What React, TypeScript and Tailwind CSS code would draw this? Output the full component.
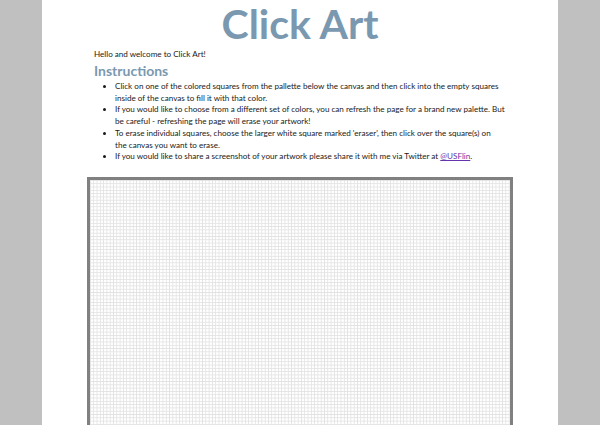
export default function App() {
  const font = { fontFamily: '"Lato", "Open Sans", sans-serif' };
  return (
    <div className="min-h-[425px] h-[425px] overflow-hidden bg-[#c0c0c0] flex justify-center">
      <div className="w-[516px] bg-white flex flex-col items-stretch text-[#1a1a1a]" style={font}>
        <h1 className="text-center text-[41px] leading-[44px] font-bold text-[#7a99b0] mt-[2px]">Click Art</h1>
        <div className="pl-[52px] pr-[47px] mt-[2px]">
          <p className="text-[8.1px] leading-[12px]">Hello and welcome to Click Art!</p>
          <h2 className="text-[14px] leading-[18px] font-bold text-[#7a99b0] mt-[2px]">Instructions</h2>
          <ul className="list-disc pl-[21px] text-[8.1px] leading-[11.7px] mt-[1px]">
            <li>Click on one of the colored squares from the pallette below the canvas and then click into the empty squares inside of the canvas to fill it with that color.</li>
            <li>If you would like to choose from a different set of colors, you can refresh the page for a brand new palette. But be careful - refreshing the page will erase your artwork!</li>
            <li>To erase individual squares, choose the larger white square marked 'eraser', then click over the square(s) on the{"\u00a0"}canvas you want to erase.</li>
            <li>If you would like to share a screenshot of your artwork please share it with me via Twitter at <a className="text-[#6633aa] underline" href="#">@USFlin</a>.</li>
          </ul>
        </div>
        <div className="mt-[14px] flex justify-center">
          <div className="w-[426px] h-[300px] shrink-0 border-[3px] border-[#808080] bg-white bg-[linear-gradient(to_right,#e2e2e2_1px,transparent_1px),linear-gradient(to_bottom,#e2e2e2_1px,transparent_1px)] bg-[size:3.3px_3.3px]" />
        </div>
      </div>
    </div>
  );
}
